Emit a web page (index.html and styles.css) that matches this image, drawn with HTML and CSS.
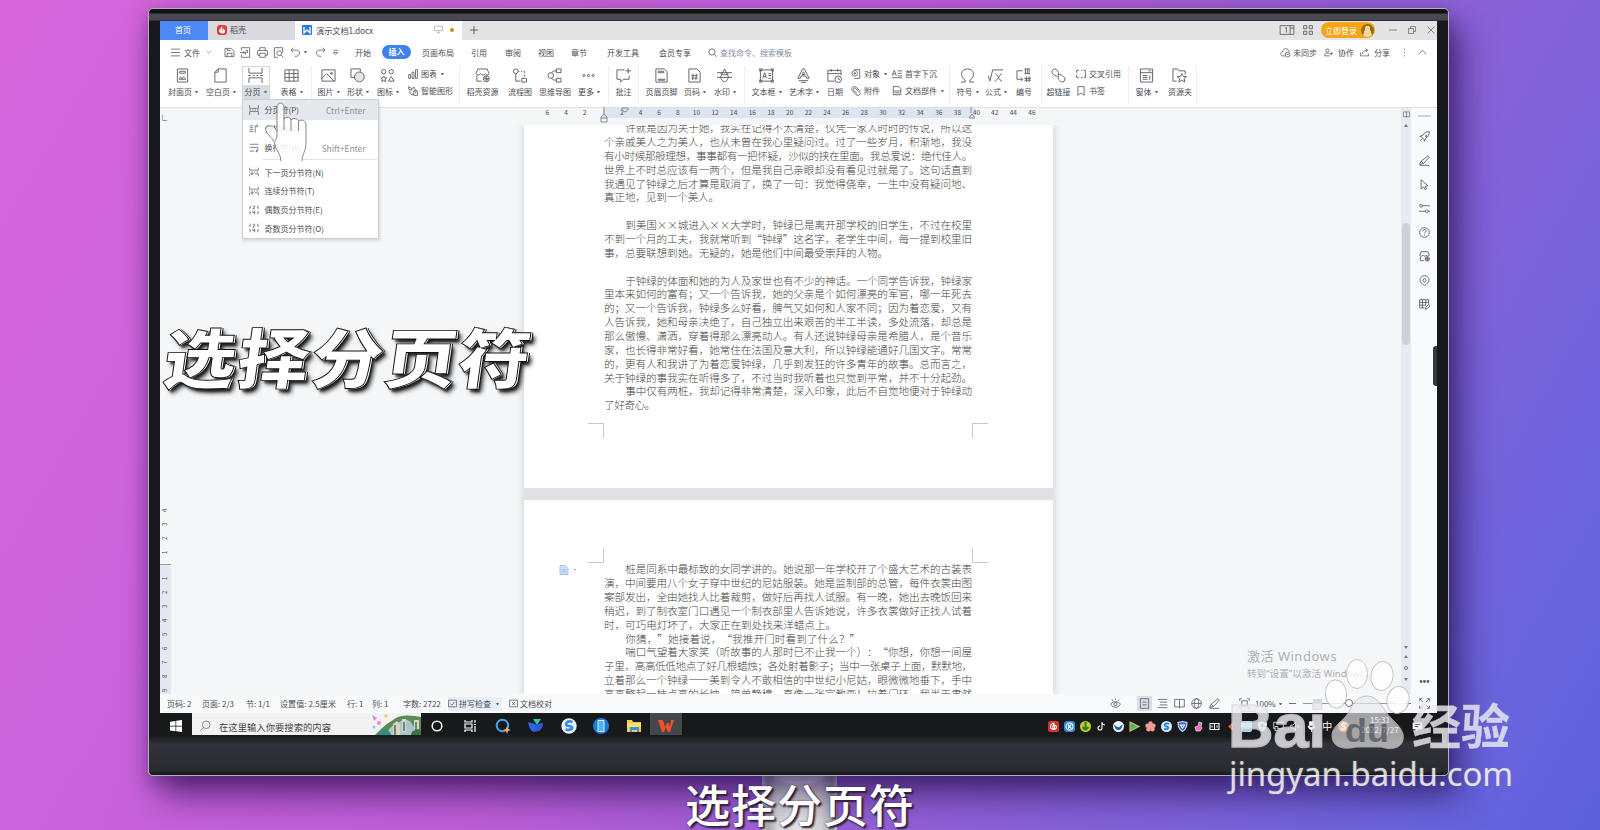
FILE: index.html
```html
<!DOCTYPE html>
<html lang="zh-CN">
<head>
<meta charset="utf-8">
<title>演示文档1.docx</title>
<link rel="stylesheet" href="styles.css">
</head>
<body>
<svg class="defs" width="0" height="0"><defs>
<symbol id="cover" viewBox="0 0 16 16"><path d="M2.5 1h11v14h-11zM5 3.5h6v2H5zM4.5 12c1-3 2-3 3 0 1-3 2-3 4 0z"/></symbol>
<symbol id="blank" viewBox="0 0 16 16"><path d="M5.500 1H14v14H2V4.500zM5.500 1v3.500H2"/></symbol>
<symbol id="brk" viewBox="0 0 16 16"><path d="M1 0v5.500h14V0M1 16v-5.500h14V16M0 8h3m2 0h2m2 0h2m2 0h3"/></symbol>
<symbol id="table" viewBox="0 0 16 16"><path d="M1 2h14v12H1zM1 6h14M1 10h14M5.500 2v12M10.500 2v12"/></symbol>
<symbol id="pic" viewBox="0 0 16 16"><path d="M1 2h14v12H1zM1 11l5-5 8 8M10.500 5h1.500v1.500h-1.500z"/></symbol>
<symbol id="shape" viewBox="0 0 16 16"><path d="M6 10H1V1h10v3"/><circle cx="10" cy="9.500" r="5.200" fill="#e3e5e8"/></symbol>
<symbol id="iconset" viewBox="0 0 16 16"><circle cx="4" cy="4" r="2.300"/><circle cx="12" cy="4" r="2.300"/><path d="M12 9l3 5H9zM4 8.500l1 2 2.200.2-1.700 1.500.6 2.300L4 13.300l-2.100 1.200.6-2.300L.8 10.700l2.200-.2z"/></symbol>
<symbol id="chart" viewBox="0 0 16 16"><path d="M1 9h3v6H1zM6.500 5h3v10h-3zM12 1h3v14h-3z"/></symbol>
<symbol id="smart" viewBox="0 0 16 16"><path d="M1 1l5 3v3L1 5zM6 4l4-2v3M3 8c0 4 2 6 5 6M9 8h6v7H9zM11 8V6h2v2M11 11h2"/></symbol>
<symbol id="store" viewBox="0 0 16 16"><path d="M3 1h10l2 5c-1 2-3 2-4 0-1 2-4 2-5 0-1 2-4 2-5 0zM2 8v6h5"/><circle cx="12" cy="11.500" r="3.200"/><path d="M9 11.500h6M12 8.500v6M10 10l4 3"/></symbol>
<symbol id="flow" viewBox="0 0 16 16"><circle cx="4" cy="3.500" r="2.500"/><path d="M6.500 3.500h1.500m1.500 0h1.500m1.500 0h1v2m0 1.500v2M4 6v8h5M10.500 11h5v4h-5z"/></symbol>
<symbol id="mind" viewBox="0 0 16 16"><circle cx="4" cy="8" r="3"/><path d="M5 5c1-2 3-2 5-2M5 11c1 2 3 2 5 2M10 1h5v4h-5zM10 11h5v4h-5z"/></symbol>
<symbol id="more" viewBox="0 0 16 16"><circle cx="3" cy="8" r="1.100"/><circle cx="8" cy="8" r="1.100"/><circle cx="13" cy="8" r="1.100"/></symbol>
<symbol id="note" viewBox="0 0 16 16"><path d="M9 2H1v10h4v3l3-3h6V8M13 0v6M10 3h6"/></symbol>
<symbol id="header" viewBox="0 0 16 16"><path d="M2 1h9l3 3v11H2zM4.500 3.500h6v1.500h-6zM4.500 12h7v1h-7z"/></symbol>
<symbol id="pagenum" viewBox="0 0 16 16"><path d="M2 1h8.500L14 4.500V15H2zM6.500 6L6 13M10 6l-.5 7M4.500 8.200h7M4.500 10.800h7"/></symbol>
<symbol id="water" viewBox="0 0 16 16"><path d="M0 5h16M0 10h16M3.500 10L8 1l4.500 9M4 5c0 3 8 3 8 0M4 10c1 6 7 6 8 0"/></symbol>
<symbol id="textbox" viewBox="0 0 16 16"><path d="M1.500 2h13v12h-13zM4 11l2-6 2 6M4.800 9h2.400M10 6h3M10 8h3M10 11h3M0 1h3v2H0zM13 1h3v2h-3zM0 13h3v2H0zM13 13h3v2h-3z"/></symbol>
<symbol id="art" viewBox="0 0 16 16"><path d="M2 11L7 1h2l5 10h-2.500l-1-2.500h-5l-1 2.500zM8 4l1.500 3h-3zM3 13.500h10M5.500 15.300h5"/></symbol>
<symbol id="date" viewBox="0 0 16 16"><path d="M8 14H1V2.500h14V8M1 6h14M4.500 1v3M11.500 1v3"/><circle cx="12" cy="12" r="3.500"/><path d="M12 10v2h2"/></symbol>
<symbol id="object" viewBox="0 0 16 16"><path d="M5 1h9v14H5"/><circle cx="6" cy="7" r="4.500"/><path d="M4 7h4M6 5v4"/></symbol>
<symbol id="clip" viewBox="0 0 16 16"><path d="M15 8L8 2C4-1-1 3 2 7l6 7c4 3 9-1 6-4L7 4C5 2 3 5 4 7l6 5"/></symbol>
<symbol id="drop" viewBox="0 0 16 16"><path d="M0 11L3.500 2 7 11M1.500 8h4M9 3h7M9 7h7M9 11h7M0 14h16"/></symbol>
<symbol id="parts" viewBox="0 0 16 16"><path d="M2 14V1h9l3 3v10zM2 8h12M4 11h8"/></symbol>
<symbol id="omega" viewBox="0 0 16 16"><path d="M1 15h4.500v-2C0 10 0 1 8 1s8 9 2.500 12v2H15"/></symbol>
<symbol id="formula" viewBox="0 0 16 16"><path d="M0 8l2 6L5 2h11M8 6c2 0 4 8 7 8M15 6c-2 0-5 8-8 8"/></symbol>
<symbol id="number" viewBox="0 0 16 16"><path d="M7 3H1v9h6M5 10l2 2-2 2M10 1v5M12 1v5M14 1v5M9 1h6M9 6h6M11 9v6M14 9v6M9 11h7M9 13h7"/></symbol>
<symbol id="link" viewBox="0 0 16 16"><path d="M7 9C3 8-1 5 2 2s7 2 6 6M8 7c4 0 9 4 6 7s-8-2-6-6"/></symbol>
<symbol id="cross" viewBox="0 0 16 16"><path d="M5 2H1v4M1 9v5h4M8 14h3M12 2h3v12h-2M8 2h2"/></symbol>
<symbol id="bookmark" viewBox="0 0 16 16"><path d="M3 1h10v14l-5-4-5 4z"/></symbol>
<symbol id="form" viewBox="0 0 16 16"><path d="M1.500 1h13v14h-13zM1.500 5h13M4 8h5M4 10h5M4 12h5M11.500 8v5M10 3h3"/></symbol>
<symbol id="folderstar" viewBox="0 0 16 16"><path d="M5 14H1V1h5l1.500 2H14v4M10.500 6l1.500 3 3.500.2-2.700 2 1 3.800-3.300-2-3.300 2 1-3.800-2.700-2L9 9z"/></symbol>
<symbol id="save" viewBox="0 0 16 16"><path d="M1.500 2h9l4 4v8h-13zM4.500 14V9h7v5M5 2v3h5"/></symbol>
<symbol id="pdf" viewBox="0 0 16 16"><path d="M2 5V1h12v14H2v-4M0 8h7M5 6l2 2-2 2M8 5h3v3H8v3"/></symbol>
<symbol id="print" viewBox="0 0 16 16"><path d="M4 5V1h8v4M4 12H1V5h14v7h-3M4 9h8v6H4z"/></symbol>
<symbol id="preview" viewBox="0 0 16 16"><path d="M7 15H2V1h12v7"/><circle cx="9" cy="9" r="3.500"/><path d="M11.500 11.500L15 15"/></symbol>
<symbol id="undo" viewBox="0 0 16 16"><path d="M5 1L1.500 4.500 5 8M1.500 4.500H9c7 0 6 9 0 9H7"/></symbol>
<symbol id="redo" viewBox="0 0 16 16"><path d="M11 1l3.500 3.500L11 8M14.500 4.500H7c-7 0-6 9 0 9h2"/></symbol>
<symbol id="chev" viewBox="0 0 16 16"><path d="M2 5l6 6 6-6"/></symbol>
<symbol id="up" viewBox="0 0 16 16"><path d="M1 11l7-7 7 7"/></symbol>
<symbol id="menu" viewBox="0 0 16 16"><path d="M0 2h16M0 8h16M0 14h16"/></symbol>
<symbol id="qat" viewBox="0 0 16 16"><path d="M4 4h8M4 8h8l-4 4z"/></symbol>
<symbol id="search" viewBox="0 0 16 16"><circle cx="7" cy="7" r="5.500"/><path d="M11 11l4.500 4.500"/></symbol>
<symbol id="cloud" viewBox="0 0 16 16"><path d="M7 13H4c-4 0-4-6 0-6 0-6 9-6 9 0"/><circle cx="11" cy="11" r="3.500"/><path d="M9.500 11h3"/></symbol>
<symbol id="collab" viewBox="0 0 16 16"><circle cx="6" cy="4.500" r="3"/><path d="M1 14c0-6 8-6 9-3M1 14h9M10 10h6M13 7v6"/></symbol>
<symbol id="share" viewBox="0 0 16 16"><path d="M1 8v6h14v-4M4 11c0-5 4-7 9-7M10 1l4 3-4 3"/></symbol>
<symbol id="vdots" viewBox="0 0 16 16"><path d="M8 1v2M8 7v2M8 13v2"/></symbol>
<symbol id="col" viewBox="0 0 16 16"><path d="M1 3h6M1 6h6M1 9h6M1 12h6M10 14V3h4M12 1l2.500 2L12 5"/></symbol>
<symbol id="wrap" viewBox="0 0 16 16"><path d="M1 2h14M1 13h7M1 7h13v6h-3M13 11l-2 2 2 2"/></symbol>
<symbol id="sec" viewBox="0 0 16 16"><path d="M1 1v4h14V1M0 8h2m2 0h2m2 0h2m2 0h3M1 15v-4M15 15v-4H9M3 10h4l-2 3z"/></symbol>
<symbol id="evn" viewBox="0 0 16 16"><path d="M2 1v4H0M14 1v4h2M6 2h3v2L6 6h3M2 15v-4H0M14 15v-4h2M6 9v3h4M9 9v6"/></symbol>
<symbol id="rocket" viewBox="0 0 16 16"><path d="M15 1c-5 0-8 2-9 5L1 8l3 1 3 3 1 3 2-5c3-1 5-4 5-9zM9 6h2v2H9M2 14l3-3"/></symbol>
<symbol id="pen" viewBox="0 0 16 16"><path d="M1 14l2-5L13 1l2 2-8 9zM3 9l3 3M1 15h14"/></symbol>
<symbol id="arrow" viewBox="0 0 16 16"><path d="M3 1l10 9-4 .5 2 4-2 1-2-4-4 3z"/></symbol>
<symbol id="sliders" viewBox="0 0 16 16"><circle cx="3" cy="4" r="2"/><path d="M5 4h11M0 12h9M13 12h3"/><circle cx="11" cy="12" r="2"/></symbol>
<symbol id="help" viewBox="0 0 16 16"><circle cx="8" cy="8" r="7"/><path d="M5.500 6c0-3 5-3 5 0 0 1.500-2.500 1.500-2.500 3.500M8 11v1.500"/></symbol>
<symbol id="bulb" viewBox="0 0 16 16"><path d="M5 13c-6-4-4-12 3-12s9 8 3 12l-3 2.500zM8 4.500l2.500 3L8 11 5.500 7.500z"/></symbol>
<symbol id="sheet" viewBox="0 0 16 16"><path d="M8 13H1V1h13v6M1 5h13M1 9h9M5 1v12M10 1v8M9 15l1-3 4-4 2 2-4 4z"/></symbol>
<symbol id="eye" viewBox="0 0 16 16"><path d="M1 9c3-5 11-5 14 0-3 6-11 6-14 0zM8 1v2M3 2l1 2M13 2l-1 2"/><circle cx="8" cy="9" r="2.300"/></symbol>
<symbol id="pageview" viewBox="0 0 16 16"><path d="M2 1h12v14H2zM5 6h6M5 10h6"/></symbol>
<symbol id="outline" viewBox="0 0 16 16"><path d="M1 2h14M4 6h11M4 10h11M1 14h14"/></symbol>
<symbol id="book" viewBox="0 0 16 16"><path d="M1 2h14v11H1zM8 2v13"/></symbol>
<symbol id="globe" viewBox="0 0 16 16"><circle cx="8" cy="8" r="7"/><ellipse cx="8" cy="8" rx="3.200" ry="7"/><path d="M1 8h14"/></symbol>
<symbol id="full" viewBox="0 0 16 16"><path d="M1 5V1h4M1 1l5 5M11 1h4v4M15 1l-5 5M1 11v4h4M1 15l5-5M15 11v4h-4M15 15l-5-5"/></symbol>
<symbol id="fit" viewBox="0 0 16 16"><path d="M1 4V1h3M12 1h3v3M1 12v3h3M12 15h3v-3M4 4h8v8H4z"/></symbol>
<symbol id="check" viewBox="0 0 16 16"><path d="M1 2h14v12H1zM4 8l3 3 5-6"/></symbol>
<symbol id="proof" viewBox="0 0 16 16"><path d="M1 2h14v12H1zM5.500 5l5 6M10.500 5l-5 6"/></symbol>
<symbol id="restore" viewBox="0 0 16 16"><path d="M1 5h10v10H1zM5 5V1h10v10h-4"/></symbol>
<symbol id="close" viewBox="0 0 16 16"><path d="M1 1l14 14M15 1L1 15"/></symbol>
<symbol id="min" viewBox="0 0 16 16"><path d="M0 8h16"/></symbol>
<symbol id="plus" viewBox="0 0 16 16"><path d="M0 8h16M8 0v16"/></symbol>
<symbol id="tiles" viewBox="0 0 16 16"><path d="M1 1h5v5H1zM10 1h5v5h-5zM1 10h5v5H1zM10 10h5v5h-5z"/></symbol>
<symbol id="layout" viewBox="0 0 24 16"><path d="M1 1h22v14H1zM17 1v14M17 5h6M9 5l2-1v8"/></symbol>
<symbol id="present" viewBox="0 0 16 16"><path d="M1 2h14v8H1zM8 10v4M5 14h6"/></symbol>
</defs></svg>

<div class="stand"></div>
<main class="monitor">
<div class="screen">

<header class="tabs">
  <div class="tab home">首页</div>
  <div class="tab docer"><span class="flame"><svg viewBox="0 0 10 10"><path d="M5 1c0 2-3 3-3 5s5 4 6 1c.5-2-1-2-1-4-1 1-1 2-1.500 3C4.500 5 6 3 5 1z" fill="#fff"/></svg></span>稻壳</div>
  <div class="tab doc"><span class="wdoc"><svg viewBox="0 0 10 10"><path d="M2 2v6l3-3 3 3V2" fill="none" stroke="#fff" stroke-width="1.300"/></svg></span><span class="fit" data-w="57">演示文档1.docx</span><svg class="i pres"><use href="#present"/></svg><b class="dot"></b></div>
  <svg class="i add"><use href="#plus"/></svg>
  <div class="winbtns">
    <svg class="i lay"><use href="#layout"/></svg><svg class="i til"><use href="#tiles"/></svg>
    <span class="login">立即登录<i class="avatar"></i></span>
    <svg class="i"><use href="#min"/></svg><svg class="i"><use href="#restore"/></svg><svg class="i"><use href="#close"/></svg>
  </div>
</header>

<nav class="menubar">
  <svg class="i"><use href="#menu"/></svg><span>文件</span><svg class="i sm"><use href="#chev"/></svg>
  <svg class="i b"><use href="#save"/></svg><svg class="i b"><use href="#pdf"/></svg><svg class="i b"><use href="#print"/></svg><svg class="i b"><use href="#preview"/></svg><svg class="i b"><use href="#undo"/></svg><i class="car"></i><svg class="i b"><use href="#redo"/></svg><svg class="i"><use href="#qat"/></svg>
  <span>开始</span><span class="active">插入</span><span>页面布局</span><span>引用</span><span>审阅</span><span>视图</span><span>章节</span><span>开发工具</span><span>会员专享</span>
  <svg class="i"><use href="#search"/></svg><span class="find fit" data-w="72">查找命令、搜索模板</span>
  <svg class="i b"><use href="#cloud"/></svg><span>未同步</span><svg class="i"><use href="#collab"/></svg><span>协作</span><svg class="i"><use href="#share"/></svg><span>分享</span><svg class="i"><use href="#vdots"/></svg><svg class="i"><use href="#up"/></svg>
</nav>

<section class="ribbon">
  <div class="btn"><svg><use href="#cover"/></svg><span>封面页<i class="car"></i></span></div>
  <div class="btn"><svg><use href="#blank"/></svg><span>空白页<i class="car"></i></span></div>
  <div class="btn open"><svg><use href="#brk"/></svg><span>分页<i class="car"></i></span></div>
  <div class="btn"><svg><use href="#table"/></svg><span>表格<i class="car"></i></span></div>
  <div class="btn sep"><svg><use href="#pic"/></svg><span>图片<i class="car"></i></span></div>
  <div class="btn"><svg><use href="#shape"/></svg><span>形状<i class="car"></i></span></div>
  <div class="btn"><svg><use href="#iconset"/></svg><span>图标<i class="car"></i></span></div>
  <div class="stack"><p><svg><use href="#chart"/></svg>图表<i class="car"></i></p><p><svg><use href="#smart"/></svg>智能图形</p></div>
  <div class="btn sep"><svg><use href="#store"/></svg><span>稻壳资源</span></div>
  <div class="btn"><svg><use href="#flow"/></svg><span>流程图</span></div>
  <div class="btn"><svg><use href="#mind"/></svg><span>思维导图</span></div>
  <div class="btn last"><svg><use href="#more"/></svg><span>更多<i class="car"></i></span></div>
  <div class="btn sep"><svg><use href="#note"/></svg><span>批注</span></div>
  <div class="btn sep"><svg><use href="#header"/></svg><span>页眉页脚</span></div>
  <div class="btn"><svg><use href="#pagenum"/></svg><span>页码<i class="car"></i></span></div>
  <div class="btn"><svg><use href="#water"/></svg><span>水印<i class="car"></i></span></div>
  <div class="btn sep"><svg><use href="#textbox"/></svg><span>文本框<i class="car"></i></span></div>
  <div class="btn"><svg><use href="#art"/></svg><span>艺术字<i class="car"></i></span></div>
  <div class="btn"><svg><use href="#date"/></svg><span>日期</span></div>
  <div class="stack tight"><p><svg><use href="#object"/></svg>对象<i class="car"></i></p><p><svg><use href="#clip"/></svg>附件</p></div>
  <div class="stack tight"><p><svg><use href="#drop"/></svg>首字下沉</p><p><svg><use href="#parts"/></svg>文档部件<i class="car"></i></p></div>
  <div class="btn sep"><svg><use href="#omega"/></svg><span>符号<i class="car"></i></span></div>
  <div class="btn"><svg><use href="#formula"/></svg><span>公式<i class="car"></i></span></div>
  <div class="btn"><svg><use href="#number"/></svg><span>编号</span></div>
  <div class="btn sep"><svg><use href="#link"/></svg><span>超链接</span></div>
  <div class="stack tight"><p><svg><use href="#cross"/></svg>交叉引用</p><p><svg><use href="#bookmark"/></svg>书签</p></div>
  <div class="btn sep"><svg><use href="#form"/></svg><span>窗体<i class="car"></i></span></div>
  <div class="btn"><svg><use href="#folderstar"/></svg><span>资源夹</span></div>
  <div class="sep"></div>
</section>

<section class="work">
  <div class="vruler"><span class="corner">∟</span><div class="vtop"><span>4</span><span>3</span><span>2</span><span>1</span></div><div class="vband"><span>1</span><span>2</span><span>3</span><span>4</span><span>5</span><span>6</span><span>7</span><span>8</span><span>9</span></div></div>
  <div class="canvas">
    <div class="ruler"><span>6</span><span>4</span><span>2</span><span class="ind"></span><span class="on">2</span><span class="on">4</span><span class="on">6</span><span class="on">8</span><span class="on">10</span><span class="on">12</span><span class="on">14</span><span class="on">16</span><span class="on">18</span><span class="on">20</span><span class="on">22</span><span class="on">24</span><span class="on">26</span><span class="on">28</span><span class="on">30</span><span class="on">32</span><span class="on">34</span><span class="on">36</span><span class="on">38</span><span class="end">40</span><span>42</span><span>44</span><span>46</span>
      <svg class="mk first" viewBox="0 0 8 16"><path d="M4 0v7M1 10l3-3 3 3v5H1zM1 11h6"/></svg><svg class="mk hang" viewBox="0 0 8 16"><path d="M1 1h6v2L4 5 1 3z"/></svg><svg class="mk right" viewBox="0 0 8 16"><path d="M3 0v6M1 11l3-4 3 4z"/></svg></div>
    <div class="pages">
      <article class="page one">
        <div class="ln in j">许就是因为关于她，我实在记得不太清楚，仅凭一家人时时的传说，所以这</div>
        <div class="ln j">个亲戚美人之为美人，也从未曾在我心里疑问过。过了一些岁月，积渐地，我没</div>
        <div class="ln j">有小时候那般理想，事事都有一把怀疑，沙似的挟在里面。我总爱说：绝代佳人。</div>
        <div class="ln j">世界上不时总应该有一两个，但是我自己亲眼却没有看见过就是了。这句话直到</div>
        <div class="ln j">我遇见了钟绿之后才算是取消了，换了一句：我觉得侥幸，一生中没有疑问地、</div>
        <div class="ln" data-w="115">真正地，见到一个美人。</div>
        <div class="ln"></div>
        <div class="ln in j">到美国××城进入××大学时，钟绿已是离开那学校的旧学生，不过在校里</div>
        <div class="ln j">不到一个月的工夫，我就常听到“钟绿”这名字，老学生中间，每一提到校里旧</div>
        <div class="ln" data-w="284">事，总要联想到她。无疑的，她是他们中间最受崇拜的人物。</div>
        <div class="ln"></div>
        <div class="ln in j">于钟绿的体面和她的为人及家世也有不少的神话。一个同学告诉我，钟绿家</div>
        <div class="ln j">里本来如何的富有；又一个告诉我，她的父亲是个如何漂亮的军官，哪一年死去</div>
        <div class="ln j">的；又一个告诉我，钟绿多么好看，脾气又如何和人家不同；因为着恋爱，又有</div>
        <div class="ln j">人告诉我，她和母亲决绝了，自己独立出来艰苦的半工半读，多处流落，却总是</div>
        <div class="ln j">那么傲慢、潇洒，穿着得那么漂亮动人。有人还说钟绿母亲是希腊人，是个音乐</div>
        <div class="ln j">家，也长得非常好看，她常住在法国及意大利，所以钟绿能通好几国文字。常常</div>
        <div class="ln j">的，更有人和我讲了为着恋爱钟绿，几乎到发狂的许多青年的故事。总而言之，</div>
        <div class="ln j">关于钟绿的事我实在听得多了，不过当时我听着也只觉到平常，并不十分起劲。</div>
        <div class="ln in j">事中仅有两桩，我却记得非常清楚，深入印象，此后不自觉地便对于钟绿动</div>
        <div class="ln" data-w="51">了好奇心。</div>
        <div class="marks bottom"><i></i><i></i></div>
      </article>
      <div class="gap"></div>
      <article class="page two">
        <svg class="pgtag" viewBox="0 0 18 10"><path d="M1 .500h5l3 3v6H1z" fill="#cfe0f7" stroke="#8fb3e6"/><path d="M3 5h4M3 7h4" stroke="#8fb3e6"/><path d="M14.500 4h2.500l-1.200 1.500z" fill="#888" stroke="none"/></svg>
        <div class="marks top"><i></i><i></i></div>
        <div class="ln in j">桩是同系中最标致的女同学讲的。她说那一年学校开了个盛大艺术的古装表</div>
        <div class="ln j">演，中间要用八个女子穿中世纪的尼姑服装。她是监制部的总管，每件衣裳由图</div>
        <div class="ln j">案部发出，全由她找人比着裁剪，做好后再找人试服。有一晚，她出去晚饭回来</div>
        <div class="ln j">稍迟，到了制衣室门口遇见一个制衣部里人告诉她说，许多衣裳做好正找人试着</div>
        <div class="ln" data-w="232">时，可巧电灯坏了，大家正在到处找来洋蜡点上。</div>
        <div class="ln in" data-w="235">你猜，”她接着说，“我推开门时看到了什么？”</div>
        <div class="ln in j">喘口气望着大家笑（听故事的人那时已不止我一个）：“你想，你想一间屋</div>
        <div class="ln j">子里，高高低低地点了好几根蜡烛；各处射着影子；当中一张桌子上面，默默地，</div>
        <div class="ln j">立着那么一个钟绿——美到令人不敢相信的中世纪小尼姑，眼微微地垂下，手中</div>
        <div class="ln j">高高擎起一枝点亮的长烛。简单静穆，直像一张宗教画！拉着门环，我半天肃然</div>
      </article>
    </div>
  </div>
  <div class="scroll"><svg class="i"><use href="#book"/></svg><b class="tri upw"></b><div class="thumb"></div><b class="tri"></b><b class="tri upw dbl"></b><b class="ring"></b><b class="tri dbl2"></b></div>
  <aside class="side"><b class="grip"></b><svg class="i"><use href="#rocket"/></svg><svg class="i"><use href="#pen"/></svg><svg class="i"><use href="#arrow"/></svg><svg class="i"><use href="#sliders"/></svg><svg class="i"><use href="#help"/></svg><svg class="i"><use href="#store"/></svg><svg class="i"><use href="#bulb"/></svg><svg class="i"><use href="#sheet"/></svg><svg class="i dots"><use href="#more"/></svg></aside>
  <div class="activate"><p class="fit" data-w="90">激活 Windows</p><p class="fit" data-w="127">转到“设置”以激活 Windows。</p></div>
</section>

<footer class="status">
  <span>页码: 2</span><span>页面: 2/3</span><span>节: 1/1</span><span class="fit" data-w="56">设置值: 2.5厘米</span><span>行: 1</span><span>列: 1</span><span>字数: 2722</span>
  <span class="spell"><svg class="i"><use href="#check"/></svg>拼写检查<i class="car"></i></span><span class="proof"><svg class="i"><use href="#proof"/></svg>文档校对</span>
  <svg class="i"><use href="#eye"/></svg><svg class="i sel"><use href="#pageview"/></svg><svg class="i"><use href="#outline"/></svg><svg class="i"><use href="#book"/></svg><svg class="i"><use href="#globe"/></svg><svg class="i"><use href="#pen"/></svg><svg class="i"><use href="#fit"/></svg><span>100%<i class="car"></i></span><svg class="i mn"><use href="#min"/></svg><div class="slider"><i></i><b></b></div><svg class="i mn"><use href="#plus"/></svg><svg class="i"><use href="#full"/></svg>
</footer>

<footer class="taskbar">
  <div class="start"><svg viewBox="0 0 12 12"><path d="M0 1.700l5.500-.8v4.800H0zM6.200.8L12 0v5.700H6.200zM0 6.400h5.500v4.800L0 10.400zM6.200 6.400H12V12l-5.800-.8z" fill="#fff"/></svg></div>
  <div class="searchbox"><svg class="i glass"><use href="#search"/></svg><span class="fit" data-w="112">在这里输入你要搜索的内容</span>
    <svg class="scene" viewBox="0 0 50 22"><path d="M4 22c8-8 10-10 18-15 8-7 20-4 28-3v18z" fill="#5b8c56"/><path d="M16 22c2-10 8-10 14-14s12 0 16 14z" fill="#a9c7cb"/><path d="M22 22V11l4-3 3 3v11zM31 19V6h4v13zM43 16V7h5v9z" fill="#d7d6c4"/><path d="M23 22V12h2v10M32 18V9h2v9M44 16V9h2v7" fill="#71857a"/><path d="M6 22c6-7 10-7 14-1v1z" fill="#2f8f86"/><path d="M40 22c0-5 5-6 10-5v5z" fill="#39763e"/><path d="M1 2l5 3-3 3z" fill="#d983db"/><circle cx="15" cy="3" r="1.500" fill="#f0bf45"/><circle cx="8" cy="10" r="2" fill="#ea8ccc"/><circle cx="3" cy="14" r="1.500" fill="#80cfee"/></svg></div>
  <div class="apps">
    <svg viewBox="0 0 16 16"><circle cx="8" cy="8" r="4.800" fill="none" stroke="#fff" stroke-width="1.500"/></svg>
    <svg viewBox="0 0 16 16"><path d="M3 2v2h7V2M3 14v-2h7v2M3 6h7v4H3zM13 2v3M13 8v6M12 6.500h2" fill="none" stroke="#fff" stroke-width="1.200"/></svg>
    <svg viewBox="0 0 16 16"><circle cx="7.500" cy="7.500" r="5.800" fill="none" stroke="#3fa5ee" stroke-width="2"/><path d="M12 8l1 3 3 1-3 1-1 3-1-3-3-1 3-1z" fill="#f7b552"/></svg>
    <svg viewBox="0 0 16 16"><path d="M0 4l10 3-3 7C3 14 1 10 0 4z" fill="#2865e8"/><path d="M5 1h8L9 7z" fill="#35c4ae"/><path d="M5 13c6 2 10-2 10-8-5 0-8 3-10 8z" fill="#3357de"/></svg>
    <svg viewBox="0 0 16 16"><circle cx="8" cy="8" r="7.700" fill="#e8f3ff"/><path d="M11.500 4C6 2 2 7 8 8s3 5-3.500 3.500" fill="none" stroke="#3c8cde" stroke-width="2.600"/></svg>
    <svg viewBox="0 0 16 16"><circle cx="8" cy="8" r="8" fill="#187dd9"/><path d="M5 2.500h6v11H5z" fill="#4fb2f2" stroke="#d8efff"/></svg>
    <svg viewBox="0 0 16 16"><path d="M1 2h5l1 2h8v10H1z" fill="#f6ca4e"/><path d="M1 5h14v4H1z" fill="#ffdc7c"/><path d="M4 9h9v5h-2v-2H6v2H4z" fill="#3e91d2"/></svg>
    <div class="cur"><svg viewBox="0 0 16 16"><path d="M0 2h5l2 7 2-4h2l1 4 1-7h3l-4 12h-2L8 9l-2 5H4z" fill="#f0502f"/></svg></div>
  </div>
  <div class="tray">
    <svg class="t red" viewBox="0 0 11 11"><path d="M6.500 2C4 2 2 4 2.500 6.500 3 9 8 9 8.500 6.500 9 4 5 3.500 4.500 6c0 2 2.500 2 2 0L5.500 3"/></svg>
    <svg class="t blue" viewBox="0 0 11 11"><circle cx="5.500" cy="5.500" r="3.500"/><path d="M4.500 3v5M7.500 3.500l-2.500 2 2.500 2"/></svg>
    <svg class="t lime" viewBox="0 0 11 11"><path d="M5.500 1v8M5.500 9l-3-3M5.500 9l3-3" stroke="#2e7a2a" stroke-width="2"/></svg>
    <svg class="t" viewBox="0 0 11 11"><path d="M6 1v6a2 2 0 1 1-2-2M6 2c1 2 2 2 3 2"/></svg>
    <svg class="t wh" viewBox="0 0 11 11"><path d="M2 5c3 3 5 2 7-1-1 6-6 6-7 1z" fill="#1a66b2" stroke="#1a66b2"/></svg>
    <svg class="t" viewBox="0 0 11 11"><path d="M1 1l9 4.500L1 10z" fill="#38bd78" stroke="#e8b94a"/></svg>
    <svg class="t" viewBox="0 0 11 11"><g fill="#f19a98" stroke="none"><circle cx="5.500" cy="2.500" r="2.200"/><circle cx="8.500" cy="4.700" r="2.200"/><circle cx="7.500" cy="8.300" r="2.200"/><circle cx="3.500" cy="8.300" r="2.200"/><circle cx="2.500" cy="4.700" r="2.200"/><circle cx="5.500" cy="5.500" r="2"/></g></svg>
    <svg class="t sg" viewBox="0 0 11 11"><path d="M8 3C4 1 2 5 5.500 5.500S7 9 3 8" stroke="#2b83d9" stroke-width="1.800"/></svg>
    <svg class="t" viewBox="0 0 11 11"><path d="M5.500.500l4.500 1c0 5-1 7-4.500 9C2 8.500 1 6.500 1 1.500z" fill="#3768d8" stroke="#cfdcff"/><path d="M3.500 4h4l-2 3z"/></svg>
    <svg class="t" viewBox="0 0 11 11"><path d="M3 10l-1-4 3-1 1-4 3 1-1 3 1 2-2 3z" fill="#ef6db9" stroke="#fff" stroke-width=".6"/></svg>
    <svg class="t" viewBox="0 0 11 11"><path d="M1 2.500h9v6H1zM5.500 2.500v6M3 4.500v2M8 4.500v2"/></svg>
    <svg class="t" viewBox="0 0 11 11"><path d="M8 1v9L3 5.500z" fill="#e35c33" stroke="none"/></svg>
    <svg class="t lb" viewBox="0 0 11 11"></svg>
    <svg class="t" viewBox="0 0 11 11"><path d="M5.500.500l4.500 1c0 5-1 7-4.500 9C2 8.500 1 6.500 1 1.500z" fill="#e7f5ec" stroke="none"/><path d="M5.500 3v5M3 5.500h5" stroke="#2d9d62"/></svg>
    <svg viewBox="0 0 16 16"><path d="M3 11H1V2h14v9H7M3 8h4v6H3z"/></svg><svg viewBox="0 0 16 16"><path d="M1 6h3l4-4v12l-4-4H1zM10 6l4 4M14 6l-4 4"/></svg><svg viewBox="0 0 16 16"><path d="M5 1h6v8H5zM3 7c0 7 10 7 10 0M8 12v4" fill="#fff"/></svg><span class="ime">中</span>
    <svg class="t so" viewBox="0 0 11 11"><path d="M8 3C4 1 2 5 5.500 5.500S7 9 3 8" stroke-width="1.800"/></svg>
    <div class="clock"><span>15:31</span><span>2022/7/27</span></div>
    <svg class="nt" viewBox="0 0 16 16"><path d="M1 2h14v10H9l-3 3v-3H1z" fill="#fff"/><path d="M4 5h8M4 8h6" stroke="#333"/></svg>
  </div>
</footer>

<div class="dropdown">
  <div class="row hot"><svg class="i"><use href="#brk"/></svg><span>分页符(P)</span><em>Ctrl+Enter</em></div>
  <div class="row"><svg class="i"><use href="#col"/></svg><span>分栏符(C)</span></div>
  <div class="row"><svg class="i"><use href="#wrap"/></svg><span>换行符(W)</span><em>Shift+Enter</em></div>
  <hr>
  <div class="row"><svg class="i"><use href="#sec"/></svg><span>下一页分节符(N)</span></div>
  <div class="row"><svg class="i"><use href="#sec"/></svg><span>连续分节符(T)</span></div>
  <div class="row"><svg class="i"><use href="#evn"/></svg><span>偶数页分节符(E)</span></div>
  <div class="row"><svg class="i"><use href="#evn"/></svg><span>奇数页分节符(O)</span></div>
  <svg class="hand" viewBox="0 0 44 60"><path d="M16 59C15 50 11 49 10 43 9 36 3 34 1 29c-2-5 5-7 9-3l2 3V5c0-5 7-5 7 0v12c2-3 7-2 7 1 2-3 7-1 8 1 3-2 7 0 7 4v17c0 10-4 12-4 19" fill="#fff" fill-opacity=".88"/><path d="M19 16v12M26 17v12M33.500 19v10M12 29v4c0 3-1 4-2 6" fill="none"/></svg>
</div>
<div class="notch"></div>
</div>
</main>

<div class="headline">选择分页符</div>
<div class="caption">选择分页符</div>

<div class="brand">
  <svg class="logo" viewBox="0 0 284 92"><g fill="#fff" stroke="#bbb" stroke-width="1"><ellipse cx="107" cy="36" rx="10.500" ry="14" transform="rotate(-5 107 36)"/><ellipse cx="128" cy="16" rx="10.500" ry="14.500"/><ellipse cx="153" cy="18" rx="11" ry="14.500" transform="rotate(8 153 18)"/><ellipse cx="169" cy="42" rx="11" ry="13.500" transform="rotate(12 169 42)"/></g><path d="M138 38c12 0 16 14 24 22s14 14 12 22c-2 9-13 10-22 7h-25c-11 3-23 1-24-10-1-9 8-14 14-21s8-20 21-20z" fill="#e9e9ec" fill-opacity=".82" stroke="#bbb"/><text class="bai" x="-1" y="89" textLength="98" lengthAdjust="spacingAndGlyphs">Bai</text><text class="du" x="116" y="84" textLength="44" lengthAdjust="spacingAndGlyphs">du</text><text class="jy" x="183" y="86" textLength="98" lengthAdjust="spacingAndGlyphs">经验</text></svg>
  <div class="url fit" data-w="284">jingyan.baidu.com</div>
</div>
<script src="fit.js"></script>
</body>
</html>
```

FILE: styles.css
```css
*{box-sizing:border-box}
body{margin:0;width:1600px;height:830px;overflow:hidden;position:relative;font-family:"Noto Sans CJK SC","Noto Sans",sans-serif;font-size:8px;color:#4a4d55;background:linear-gradient(120deg,#d765da 0%,#cb64dc 22%,#c05ed8 45%,#9f5fd6 60%,#8562d8 75%,#6864dd 92%,#5e61dc 100%);display:flex}
p,hr{margin:0}
.defs{position:absolute}
svg{fill:none;stroke:#5c6068;stroke-width:1;overflow:visible;flex:none}
i,em{font-style:normal}
.i{width:9px;height:9px;stroke-width:1.4}
.i.b{width:11px;height:11px;stroke-width:1.2}
.i.sm{width:6px;height:6px}
.car{display:inline-block;width:3px;border:1.5px solid transparent;border-top:2px solid #666;border-bottom:0;margin-left:3px;vertical-align:2px;flex:none}
.stand{position:absolute;left:762px;top:770px;width:75px;height:60px;background:radial-gradient(ellipse 30px 12px at 50% 6px,#fff 60%,transparent 90%),linear-gradient(90deg,#e6e6e6,#aaa 8%,#d8d8d8 20%,#e6e6e6 50%,#d5d5d5 78%,#aaa 94%,#ddd)}
.monitor{position:relative;margin:8px 0 0 147.500px;width:1301.500px;height:768px;border:1px solid #b5aebd;border-radius:5px;padding:12px 11.500px 0;background:linear-gradient(180deg,#111216 0 4px,#494751 5px 11px,#17191f 12px 725px,#1b191c 727px,#30333a 735px,#292b30 762px,#0c0d10 767px);box-shadow:12px 20px 34px rgba(30,10,70,.6),0 6px 18px rgba(40,10,80,.35)}
.screen{position:relative;width:1277px;height:714px;background:#fff;display:flex;flex-direction:column;white-space:nowrap;overflow:hidden}
.tabs{height:18.500px;background:#e2e4e6;display:flex;align-items:center;flex:none}
.tab{height:100%;display:flex;align-items:center;padding-bottom:1px}
.home{width:48px;background:#4e88f5;color:#fff;justify-content:center;padding-right:2px}
.docer{width:87px;background:#d8dadd;padding-left:9px;gap:3px}
.doc{width:167px;background:#fff;padding-left:7px;gap:4px;font-size:8.300px}
.flame,.wdoc{width:10px;height:10px;background:#e33b3b;border-radius:3px;display:flex}
.wdoc{background:#2878e6;border-radius:1px}
.flame svg,.wdoc svg{width:10px;height:10px;stroke:none}
.pres{margin-left:57px;stroke:#aaa}
.dot{width:4px;height:4px;border-radius:50%;background:#c98c15;margin-left:3px}
.add{margin-left:7.500px;width:8px;height:8px;stroke-width:2}
.winbtns{margin-left:auto;display:flex;align-items:center;gap:11px;padding-right:2px}
.lay{width:16px;height:10px}.til{width:10px;height:10px;margin-left:-3px;margin-right:-3px}
.login{width:54px;height:16px;border-radius:8px;background:#f4a414;color:#fff;display:flex;align-items:center;justify-content:flex-end;gap:4px;margin-right:3px;padding-right:1px}
.winbtns .i:nth-last-child(-n+3){width:8px;height:8px}
.avatar{width:13px;height:13px;border-radius:50%;background:radial-gradient(circle at 50% 35%,#f3d9a0 0 2.500px,transparent 3px),radial-gradient(ellipse at 50% 95%,#f3d9a0 0 4px,#9a6a14 4.500px)}
.menubar{height:26px;flex:none;display:grid;align-items:center;padding:0 0 1px 11px;grid-template-columns:13px 22px 18px 16px 17px 16px 17px 14px 11px 16px 24px 33px 34px 49px 34px 33px 33px 36px 52px 49px 12px 560px 13px 31px 14px 22px 14px 26px 18px 12px}
.menubar .car{margin-left:0}
.menubar .active{background:#3e82ef;color:#fff;border-radius:7px;width:29px;height:14px;line-height:13px;text-align:center;margin-left:-6px;font-weight:700}
.find{color:#8890a5}
.ribbon{height:42.500px;flex:none;border-bottom:1px solid #dcdfe4;padding-left:4px;display:grid;grid-template-columns:38px 38px 32px 39px 34px 26px 34px 54px 46px 30px 40px 33px 30px 46px 22px 38px 44px 32px 30px 41px 58px 36px 22px 34px 34px 53px 36px 32px 1px}
.btn{display:flex;flex-direction:column;align-items:center;height:35px;padding-top:2.500px;line-height:12px}
.btn svg{width:15px;height:15px;margin:0 1px 2.500px 0}
.last{padding-right:5px}
.sep{border-left:1px solid #eceef1;height:38px}
.open{border:1px solid #d4d8de;margin:0 2.500px 0 1.500px;padding-top:1.500px;background:linear-gradient(#fff 18px,#d9dde4 18px)}
.stack{padding:2px 0 0 3px;display:flex;flex-direction:column;gap:5px}
.stack p{display:flex;align-items:center;gap:3px;height:12px}
.stack svg{width:10px;height:10px;stroke-width:1.400}
.tight{padding-left:1px}
.stack .car{margin-left:1px}
.work{position:relative;flex:1;min-height:0;display:flex;background:#f4f6f8}
.vruler{width:11px;font-size:6px;display:flex;flex-direction:column;flex:none}
.corner{height:394.500px;font-size:7px;padding:4px 0 0 1px;line-height:10px}
.vtop{display:flex;flex-direction:column;height:62px;border-bottom:1px solid #99a}
.vtop span,.vband span{height:14px;width:10px;text-align:center;line-height:10px;writing-mode:vertical-rl;transform:rotate(180deg);flex:none}
.vband{flex:1;background:#e3e8f2;padding-top:6px;display:flex;flex-direction:column;overflow:hidden}
.canvas{flex:1;display:flex;flex-direction:column;min-width:0}
.ruler{position:relative;height:17px;padding-left:367px;display:flex;font-size:6.500px;line-height:9px;flex:none}
.ruler span{width:18.650px;text-align:center;height:10px;flex:none}
.ruler .on{background:#dfe5f0}
.ruler .ind{background:linear-gradient(90deg,transparent 50%,#dfe5f0 50%)}
.ruler .end{background:linear-gradient(90deg,#dfe5f0 42%,transparent 42%);padding-left:1px}
.mk{position:absolute;width:8px;height:16px;left:429px;top:-1px;stroke:#85888f}
.hang{left:450px}.right{left:797px}
.pages{flex:1;min-height:0;overflow:hidden;margin-left:353px;width:529px;background:#dfe1e4;box-shadow:-3px 0 5px #dfe1e4,3px 0 5px #dde0e3;clip-path:inset(0 -10px)}
.page{background:#fff;width:529px;padding-left:80px;font-size:10.600px;color:#444;font-weight:300;overflow:hidden;position:relative;text-spacing-trim:space-all}
.one{height:362.500px}
.two{height:240px;padding-top:48.500px}
.gap{height:12px}
.ln{height:13.860px;line-height:13.860px;width:368px}
.one .ln:first-child{margin-top:-3.900px}
.in{padding-left:21.300px}
.marks{display:flex;justify-content:space-between;width:400px;margin-left:-16px;height:15px}
.top{margin-bottom:-.8px}
.bottom{margin-top:11px}
.marks i{width:16px;height:15px;border:0 solid #c9c9c9}
.bottom i:first-child{border-width:1px 1px 0 0}.bottom i:last-child{border-width:1px 0 0 1px}
.top i:first-child{border-width:0 1px 1px 0}.top i:last-child{border-width:0 0 1px 1px}
.pgtag{position:absolute;left:35px;top:65px;width:18px;height:10px;stroke-width:.8}
.scroll{width:10px;background:#e7eaf2;display:flex;flex-direction:column;align-items:center;flex:none}
.scroll .i{width:7px;height:7px;margin-top:3px}
.tri{border:2px solid transparent;border-top:3px solid #777;border-bottom:0;margin-top:301px}
.tri.upw{transform:rotate(180deg);margin-top:6px}
.thumb{width:8px;height:122px;border-radius:4px;background:#ccd0d8;margin-top:96px}
.ring{width:4px;height:4px;border:1px solid #777;border-radius:50%;margin-top:8px}
.tri.dbl2{margin-top:8px}
.side{width:26px;background:#f9fafb;display:flex;flex-direction:column;align-items:center;flex:none}
.side .i{width:11px;height:11px;margin-bottom:13px;stroke-width:1.300}
.grip{width:13px;height:3px;border:1px solid #cfd2d8;border-width:1px 0;margin:7px 0 14px}
.side .dots{margin-top:353px;stroke-width:2}
.activate{position:absolute;left:1087px;top:539px;color:#aeb0b4;line-height:19px;font-size:13px;font-family:"Noto Sans","Noto Sans CJK SC",sans-serif}
.activate p+p{font-size:9.600px;line-height:15px}
.status{height:19px;flex:none;background:#f7f9fb;padding:0 0 0 7px;display:grid;align-items:center;grid-template-columns:35px 44px 34px 67px 25px 31px 44px 62px 601px 29px 18px 17px 17px 18px 30px 16px 34px 14px 101px 15px 10px}
.status>.i{width:11px;height:11px;stroke-width:1.200}
.status>.mn{width:7px;height:7px;stroke-width:2}
.status .sel{background:#d8dde6;outline:2px solid #d8dde6}
.spell,.proof{display:flex;align-items:center;gap:2px}
.spell{background:#e8eef8;height:14px;width:54px;margin-left:1px}
.slider{width:94px;height:1px;background:#999;position:relative}
.slider i{position:absolute;left:10px;top:-4px;width:9px;height:9px;background:#d9dadd}
.slider b{position:absolute;left:42px;top:-4px;width:8px;height:8px;border:1px solid #777;border-radius:50%;background:#fff}
.taskbar{height:22px;flex:none;background:#17191b;display:flex}
.taskbar svg{stroke-width:1}
.start{width:32px;display:flex;align-items:center;justify-content:center;padding-top:3px}
.start svg{width:12px;height:12px;stroke:none}
.searchbox{width:229px;background:#f2f2f2;display:flex;align-items:center;padding:0 0 0 8px;font-size:9.300px;color:#444}
.searchbox .fit{padding-top:5px}
.glass{width:11px;height:11px;margin:3px 8px 0 0;transform:scaleX(-1)}
.scene{width:50px;height:22px;stroke:none;margin-left:auto}
.apps{display:flex;align-items:center}
.apps svg{width:16px;height:16px;stroke:none;margin:4px 8.400px 0}
.apps .cur{background:#45484b;height:22px;width:32px;display:flex;align-items:center}
.apps .cur svg{margin:4px 8px 0}
.tray{margin-left:auto;margin-right:14px;padding-top:4px;display:flex;align-items:center;color:#fff;gap:5.100px}
.tray svg{width:11px;height:11px;stroke:#fff;stroke-width:1.100}
.red{background:#e02c31;border-radius:2px}.blue{background:#2f87e0;border-radius:3px}.lime{background:#c3cf2f;border-radius:6px}.wh{background:#f4fafd;border-radius:6px}.sg{background:#d7ebfd;border-radius:6px}.lb{background:#9fd2f0;border-radius:2px}.so{background:#ef7b32;border-radius:6px}
.ime{width:11px;font-size:10px;line-height:14px;text-align:center}
.clock{width:48px;margin-left:2px;display:flex;flex-direction:column;align-items:center;font-size:8px;line-height:10px;margin-top:-2px}
.tray .nt{margin-left:3px;stroke:none}
.dropdown{position:absolute;left:81.500px;top:78px;width:137px;height:139.500px;background:#fff;border:1px solid #ccd0d5;box-shadow:1px 2px 3px rgba(0,0,0,.12)}
.row{height:18.700px;display:flex;align-items:center;padding:0 12px 1px 6px}
.row .i{width:10px;height:10px;margin-right:6px;stroke-width:1.200}
.row em{margin-left:auto;color:#8e9096;font-size:8.400px}
.hot{background:#e5e8ec;height:20px}
.dropdown hr{border:0;border-top:1px solid #e2e4e8;margin:2px 0 3px 20px}
.hand{position:absolute;left:22px;top:2px;width:44px;height:60px;stroke:#777;stroke-width:.9}
.notch{position:absolute;right:0;top:325px;width:4px;height:40px;background:#33363c;border-radius:3px 0 0 3px}
.headline{position:absolute;left:165px;top:307px;font-size:72px;line-height:96px;font-weight:900;letter-spacing:1.500px;color:#fff;white-space:nowrap;transform:skewX(-8deg) scaleY(.9);-webkit-text-stroke:1px #111;text-shadow:1.500px 0 0 #fff,2.500px .500px 0 #111,5px 5px 5px rgba(0,0,0,.75),3px 3px 2px rgba(0,0,0,.5)}
.caption{position:absolute;left:685px;top:771px;font-size:45px;line-height:66px;letter-spacing:1px;font-weight:500;color:#fff;white-space:nowrap;text-shadow:2px 2px 2px #2b2038,0 0 2px #3a2a50}
.brand{position:absolute;left:1229px;top:658px;width:284px;opacity:.82}
.logo{width:284px;height:92px;display:block;stroke:none}
.logo text{fill:#ededf2;stroke:#dcdce2;stroke-width:1.500;font-weight:700;font-family:"Liberation Sans",sans-serif}
.bai{font-size:62px}
.logo .du{font-size:34px;fill:#77797e;stroke:none}
.logo .jy{font-size:48px;font-family:"Noto Sans CJK SC",sans-serif;stroke-width:.3}
.url{font-family:"Noto Sans","Noto Sans CJK SC",sans-serif;font-size:33px;line-height:44px;margin-top:2px;color:#fff;white-space:nowrap;text-shadow:0 0 2px #777}
```

FILE: fit.js
```js
// Spread each line's characters so that it fills its measure.
document.querySelectorAll('.j, [data-w]').forEach(function (el) {
  var indent = parseFloat(getComputedStyle(el).paddingLeft) || 0;
  var target = el.dataset.w ? parseFloat(el.dataset.w) : 368 - indent;
  var range = document.createRange();
  range.selectNodeContents(el);
  var width = range.getBoundingClientRect().width;
  var count = Array.from(el.textContent).length;
  el.style.letterSpacing = ((target - width) / count) + 'px';
});
```
